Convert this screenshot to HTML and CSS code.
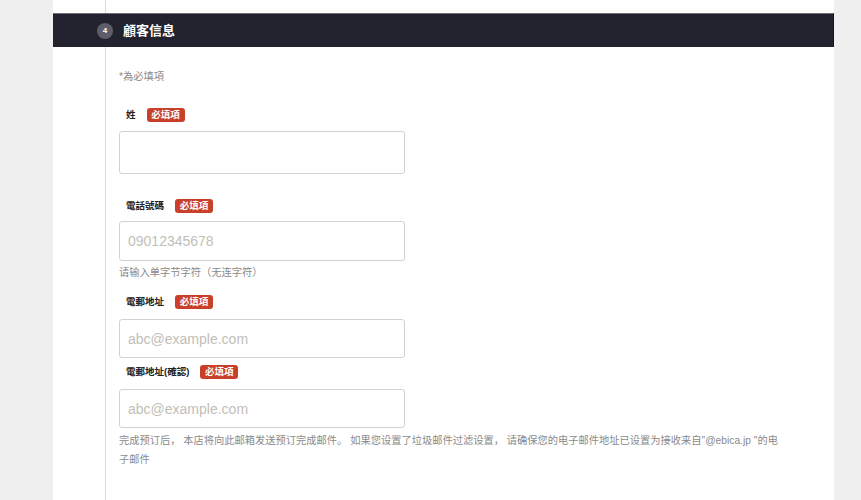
FILE: index.html
```html
<!DOCTYPE html>
<html lang="zh">
<head>
<meta charset="utf-8">
<title>顧客信息</title>
<link rel="stylesheet" href="styles.css">
</head>
<body>
<div class="panel">
  <div class="top"></div>
  <div class="head">
    <span class="step">4</span>
    <span class="title">顧客信息</span>
  </div>
  <div class="body">
    <div class="note">*為必填項</div>

    <div class="field f1">
      <div class="label-row"><span class="label">姓</span><span class="badge">必填項</span></div>
      <input class="input in-tall" type="text">
    </div>

    <div class="field f2">
      <div class="label-row"><span class="label">電話號碼</span><span class="badge">必填項</span></div>
      <input class="input in-mid" type="tel" placeholder="09012345678">
      <div class="help help-a">请输入单字节字符（无连字符）</div>
    </div>

    <div class="field f3">
      <div class="label-row"><span class="label">電郵地址</span><span class="badge">必填項</span></div>
      <input class="input" type="email" placeholder="abc@example.com">
    </div>

    <div class="field f4">
      <div class="label-row"><span class="label">電郵地址(確認)</span><span class="badge">必填項</span></div>
      <input class="input" type="email" placeholder="abc@example.com">
      <div class="help help-b">完成预订后， 本店将向此邮箱发送预订完成邮件。 如果您设置了垃圾邮件过滤设置， 请确保您的电子邮件地址已设置为接收来自"@ebica.jp "的电子邮件</div>
    </div>
  </div>
</div>
</body>
</html>
```

FILE: styles.css
```css
html, body {
  margin: 0;
  padding: 0;
}
body {
  background: #efefef;
  font-family: "Liberation Sans", "Noto Sans CJK SC", sans-serif;
  color: #222;
  height: 500px;
  overflow: hidden;
}
.panel {
  margin-left: 53px;
  width: 781px;
  height: 500px;
  background: #fff;
}
.top {
  height: 13px;
  margin-left: 52px;
  border-left: 1px solid #dcdcdc;
}
.head {
  border-top: 1px solid #6e6f76;
  border-right: 1px solid #15161d;
  background: #22232f;
  display: flex;
  align-items: center;
  padding-left: 44px;
  box-sizing: border-box;
  height: 34px;
}
.step {
  width: 16px;
  height: 16px;
  border-radius: 50%;
  background: #5d5e69;
  color: #fff;
  font-size: 8px;
  font-weight: bold;
  display: flex;
  align-items: center;
  justify-content: center;
  line-height: 1;
}
.title {
  margin-left: 10px;
  color: #fff;
  font-size: 13px;
  font-weight: bold;
  line-height: 16px;
}
.body {
  margin-left: 52px;
  border-left: 1px solid #dcdcdc;
  padding: 22px 0 0 13px;
  height: 453px;
  box-sizing: border-box;
}
.note {
  font-size: 10.25px;
  line-height: 16px;
  color: #8a8a8a;
}
.label-row {
  display: flex;
  align-items: center;
  height: 14px;
  padding-left: 7px;
}
.label {
  font-size: 9.5px;
  font-weight: bold;
  color: #222;
  line-height: 14px;
}
.badge {
  margin-left: 11px;
  background: #c8402a;
  color: #fff;
  font-size: 9.5px;
  font-weight: bold;
  line-height: 14px;
  height: 14px;
  padding: 0 4.75px;
  border-radius: 3px;
}
.input {
  display: block;
  width: 286px;
  height: 39px;
  box-sizing: border-box;
  border: 1px solid #d2d2d2;
  border-radius: 3px;
  padding: 0 8px;
  font-family: "Liberation Sans", sans-serif;
  font-size: 14px;
  color: #333;
  margin-top: 10px;
  outline: none;
}
.input::placeholder {
  color: #c2beb8;
}
.in-tall {
  height: 43px;
  margin-top: 9px;
}
.in-mid {
  height: 40px;
  margin-top: 8px;
}
.f1 { margin-top: 23px; }
.f2 { margin-top: 25px; }
.f3 { margin-top: 14px; }
.f4 { margin-top: 7px; }
.help {
  font-size: 10.25px;
  color: #8a8a8a;
}
.help-a {
  line-height: 16px;
  margin-top: 4px;
}
.help-b {
  width: 668px;
  line-height: 19px;
  margin-top: 3px;
}
```
